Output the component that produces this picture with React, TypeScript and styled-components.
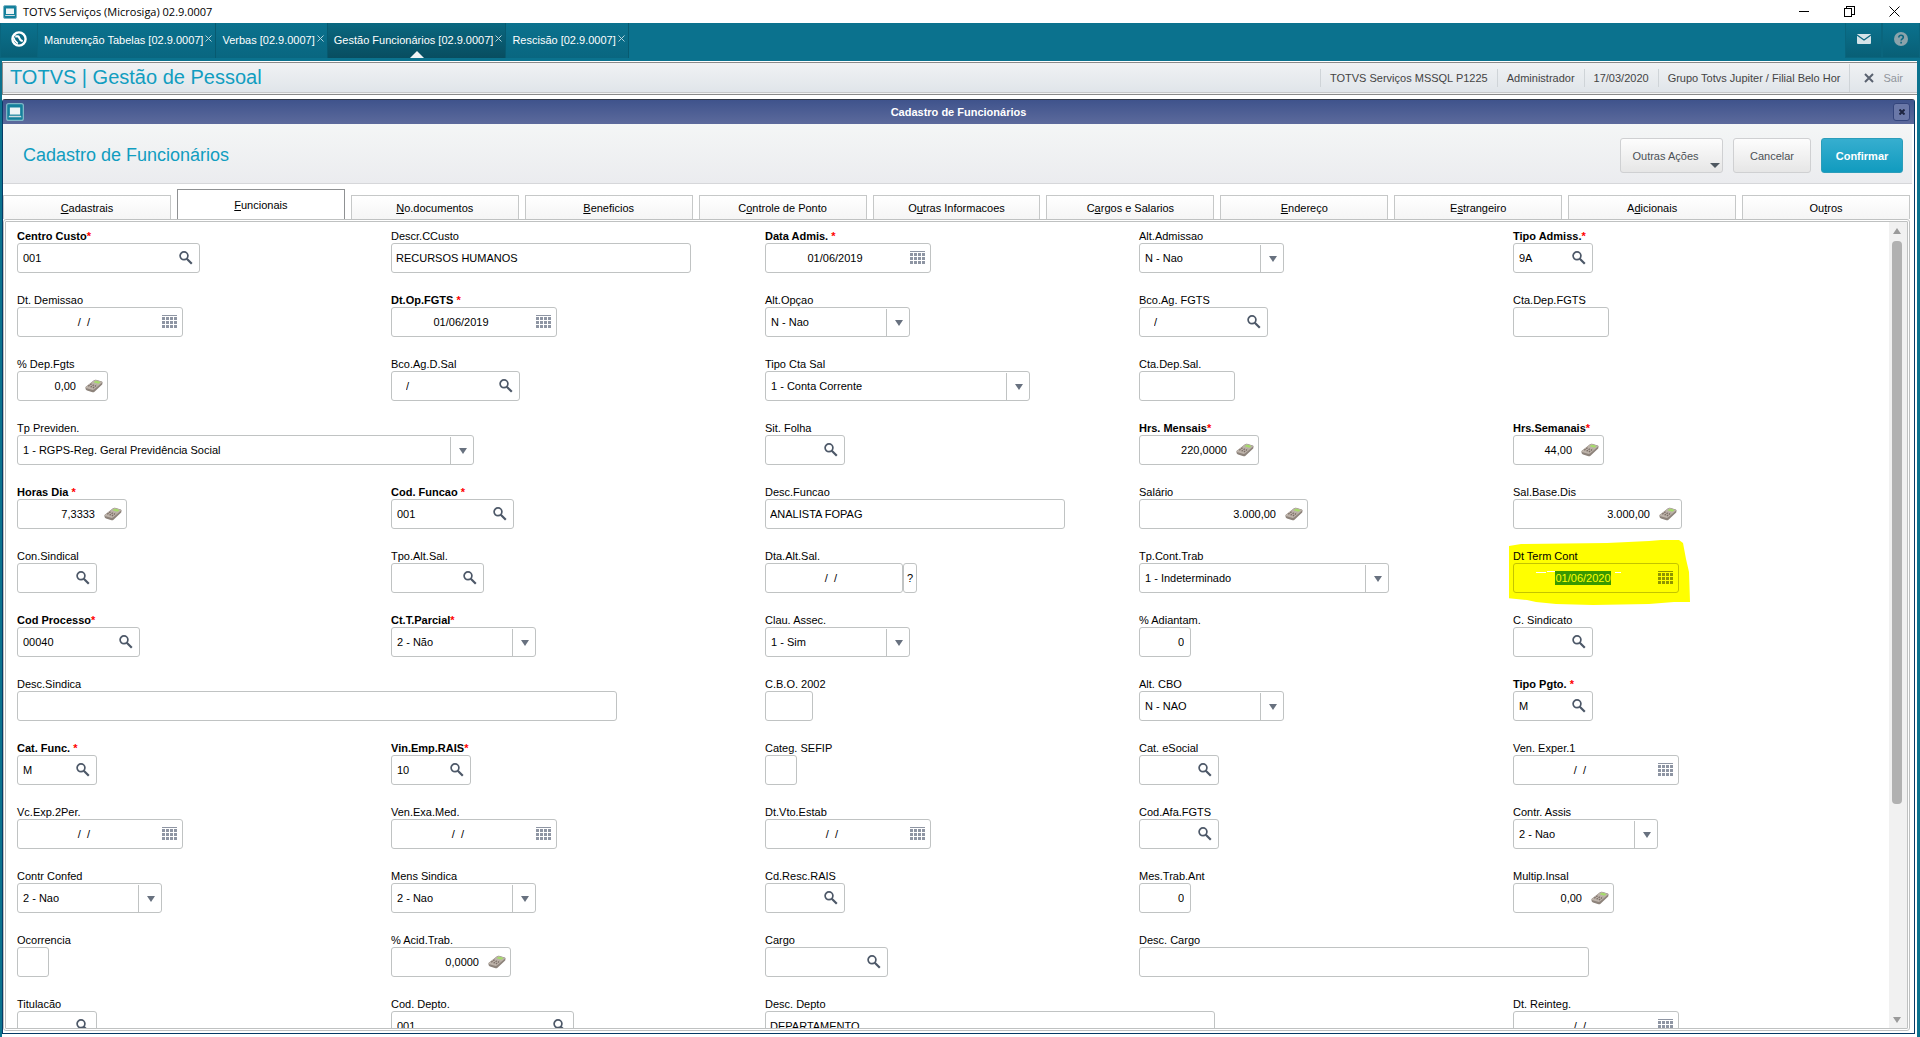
import React, { useId } from 'react';
import styled, { createGlobalStyle, css } from 'styled-components';

const GlobalStyle = createGlobalStyle`
  * { box-sizing: border-box; }
  body { margin: 0; background: #0b728e; overflow: hidden; }
  button, input, select { font: inherit; color: inherit; margin: 0; }
`;

const Page = styled.div`
  display: flex;
  flex-direction: column;
  height: 100vh;
  font: 11px/14px "Liberation Sans", Arial, sans-serif;
  color: #000;
`;

const TitleBar = styled.div`
  display: flex;
  align-items: center;
  height: 23px;
  padding: 0 20px 0 3px;
  gap: 6px;
  background: #fff;
  font: 11px/20px "Open Sans", "Noto Sans", sans-serif;
  flex: none;
`;

const TitleText = styled.span`
  flex: 1;
`;

const PlainButton = styled.button`
  display: flex;
  align-items: center;
  justify-content: center;
  padding: 0;
  border: 0;
  background: none;
  line-height: 14px;
`;

const WindowControls = styled.div`
  display: flex;
  gap: 34px;
`;

const NavBar = styled.nav`
  display: flex;
  height: 38px;
  padding-bottom: 3px;
  background: #0b728e;
  flex: none;
`;

const NavBlock = styled(PlainButton)<{ $w: number }>`
  width: ${(p) => p.$w}px;
  padding-bottom: 2px;
  background: linear-gradient(#0b728e, #085f76);
  border: 1px solid #0a657d;
  border-top: 0;
`;

const NavTab = styled.div<{ $active?: boolean }>`
  position: relative;
  display: flex;
  align-items: center;
  gap: 2px;
  padding: 0 3px 2px 6px;
  color: #fff;
  border-right: 1px solid #075a70;
  background: ${(p) => (p.$active ? 'linear-gradient(#0a6880, #084d60)' : 'linear-gradient(#0b728e, #096680)')};
`;

const NavLabel = styled(PlainButton)`
  white-space: nowrap;
`;

const NavClose = styled(PlainButton)`
  padding-bottom: 2px;
`;

const NavArrow = styled.span`
  position: absolute;
  left: 50%;
  bottom: 0;
  margin-left: -7px;
  border: 7px solid transparent;
  border-top: 0;
  border-bottom-color: #f2f4f6;
`;

const Spacer = styled.div`
  flex: 1;
`;

const Workspace = styled.main`
  display: flex;
  flex-direction: column;
  flex: 1;
  min-height: 0;
  margin: 0 3px 0 2px;
  background: #fff;
`;

const ModuleBar = styled.header`
  display: flex;
  align-items: center;
  height: 33px;
  margin-top: 1px;
  padding: 0 0 2px 7px;
  border: solid #8a8a8a;
  border-width: 1px 0 1px 1px;
  background: linear-gradient(#f0f2f4, #dfe4e9);
  box-shadow: inset 0 -1px #f4f4f4, inset 0 -2px #c6c8ca;
  flex: none;
`;

const ModuleTitle = styled.h1`
  flex: 1;
  margin: 0;
  padding-bottom: 2px;
  font-size: 20px;
  line-height: 24px;
  font-weight: 400;
  color: #119dc0;
`;

const ModuleInfo = styled.span`
  padding: 0 9px;
  line-height: 18px;
  border-left: 1px solid #cfd4d8;
  color: #444;
  white-space: nowrap;
`;

const ExitButton = styled(PlainButton)`
  gap: 9px;
  height: 28px;
  padding: 0 14px;
  border-left: 1px solid #cfd4d8;
  color: #90959c;
`;

const Dialog = styled.section`
  display: flex;
  flex-direction: column;
  flex: 1;
  min-height: 0;
  margin: 4px 2px 3px 0;
  border: 1px solid #063a66;
  border-top-color: #303848;
  border-radius: 3px 3px 0 0;
  padding-right: 2px;
`;

const DialogBar = styled.div`
  display: flex;
  align-items: center;
  height: 24px;
  margin-right: -2px;
  padding: 0 4px 0 3px;
  background: linear-gradient(#3f538c, #5c6a9c);
  color: #fff;
  font-weight: 700;
  flex: none;
`;

const DialogName = styled.span`
  flex: 1;
  text-align: center;
`;

const DialogClose = styled(PlainButton)`
  width: 17px;
  height: 18px;
  border: 1px solid #34457c;
  border-radius: 3px;
  background: #6a78a8;
`;

const DialogHeader = styled.div`
  display: flex;
  align-items: center;
  gap: 10px;
  height: 60px;
  padding: 4px 9px 0 20px;
  border-bottom: 1px solid #d6d7da;
  background: linear-gradient(#f4f6f6, #ebecef);
  flex: none;
`;

const DialogTitle = styled.h2`
  flex: 1;
  margin: 0;
  padding-bottom: 2px;
  font-size: 18px;
  line-height: 24px;
  font-weight: 400;
  color: #119dc0;
`;

const ActionButton = styled.button<{ $w: number; $primary?: boolean }>`
  position: relative;
  width: ${(p) => p.$w}px;
  height: 35px;
  padding: 0;
  border: 1px solid #cfd0d2;
  border-radius: 3px;
  background: linear-gradient(#fdfdfd, #e6e6e6);
  color: #4c5156;
  ${(p) =>
    p.$primary &&
    css`
      border-color: #2b9dba;
      background: linear-gradient(#36aecf, #119bbf);
      color: #fff;
      font-weight: 700;
    `}
`;

const ActionText = styled.span<{ $menu?: boolean }>`
  padding-right: ${(p) => (p.$menu ? 12 : 0)}px;
`;

const Caret = styled.span`
  position: absolute;
  right: 2px;
  bottom: 4px;
  border: 5px solid transparent;
  border-bottom: 0;
  border-top-color: #4f5861;
`;

const Tabs = styled.div`
  display: flex;
  align-items: flex-end;
  gap: 6px;
  height: 35px;
  margin-right: 2px;
  flex: none;
`;

const Tab = styled.button<{ $active?: boolean }>`
  flex: 1;
  height: ${(p) => (p.$active ? 30 : 24)}px;
  padding: 0;
  border: 1px solid ${(p) => (p.$active ? '#8f9193' : '#c6c8c8')};
  border-bottom: 0;
  background: ${(p) => (p.$active ? '#fff' : 'linear-gradient(#fff, #f5f5f5)')};
`;

const Panel = styled.div`
  display: flex;
  flex: 1;
  min-height: 0;
  margin: 0 2px 2px 0;
  border: 3px double #bfc1c1;
  border-radius: 3px;
`;

const FieldArea = styled.form`
  flex: 1;
  min-width: 0;
  overflow: hidden;
  padding: 6px 2px 0 11px;
  display: grid;
  grid-template-columns: repeat(5, minmax(0, 1fr));
  grid-auto-rows: 64px;
`;

const Scrollbar = styled.div`
  display: flex;
  flex-direction: column;
  align-items: center;
  width: 18px;
  padding: 6px 2px 5px 0;
  gap: 7px;
  background: #f1f1f1;
`;

const ScrollThumb = styled.div`
  width: 10px;
  height: 563px;
  border-radius: 4px;
  background: #b1b1b1;
`;

const ScrollArrow = styled.span<{ $down?: boolean }>`
  border: 4px solid transparent;
  ${(p) => (p.$down ? 'border-bottom: 0; border-top: 6px solid #9a9a9a; margin-top: auto;' : 'border-top: 0; border-bottom: 6px solid #9a9a9a;')}
`;

const FieldCell = styled.div<{ $col: number; $row: number }>`
  position: relative;
  grid-column: ${(p) => p.$col};
  grid-row: ${(p) => p.$row};
`;

const Label = styled.label<{ $required?: boolean }>`
  position: relative;
  display: block;
  height: 15px;
  line-height: 16px;
  font-weight: ${(p) => (p.$required ? 700 : 400)};
`;

const Star = styled.span`
  color: #f00;
`;

const ControlRow = styled.div`
  display: flex;
`;

const Box = styled.div<{ $w: number; $marked?: boolean }>`
  position: relative;
  display: flex;
  align-items: center;
  width: ${(p) => p.$w}px;
  height: 30px;
  flex: none;
  border: 1px solid ${(p) => (p.$marked ? '#c4c400' : '#c0c3c3')};
  border-radius: 3px;
  background: ${(p) => (p.$marked ? 'transparent' : '#fff')};
`;

const padFor: Record<Kind, string> = {
  text: '0 4px',
  num: '0 6px',
  search: '0 0 0 5px',
  code: '0 0 0 14px',
  date: '0',
  ask: '0',
  calc: '0 4px 0 0',
  select: '0 5px',
};

const TextInput = styled.input<{ $kind: Kind }>`
  flex: 1;
  min-width: 0;
  height: 26px;
  padding: ${(p) => padFor[p.$kind]};
  border: 0;
  outline: 0;
  background: transparent;
  text-align: ${(p) =>
    p.$kind === 'num' || p.$kind === 'calc' ? 'right' : p.$kind === 'date' || p.$kind === 'ask' ? 'center' : 'left'};
`;

const MarkedDate = styled(TextInput)`
  flex: none;
  width: 56px;
  height: 14px;
  margin: 0 41px;
  background: #389800;
  color: #ff0;
`;

const Select = styled.select`
  appearance: none;
  flex: 1;
  min-width: 0;
  height: 28px;
  padding: 0 24px 0 5px;
  border: 0;
  outline: 0;
  background: transparent;
`;

const SelectArrow = styled.span`
  position: absolute;
  right: 0;
  top: 1px;
  bottom: 0;
  width: 23px;
  padding-left: 2px;
  display: flex;
  align-items: center;
  justify-content: center;
  border-left: 1px solid #c0c3c3;
  pointer-events: none;

  &::after {
    content: '';
    border: 4px solid transparent;
    border-top: 6px solid #68717f;
    border-bottom: 0;
  }
`;

const IconButton = styled(PlainButton)<{ $w: number }>`
  width: ${(p) => p.$w}px;
  height: 26px;
  flex: none;
`;

const AskButton = styled(PlainButton)`
  width: 14px;
  height: 30px;
  border: 1px solid #c0c3c3;
  border-radius: 3px;
`;

const Highlight = styled.svg`
  position: absolute;
  left: -4px;
  top: -8px;
`;

const AppIcon = ({ size = 14 }: { size?: number }) => (
  <svg width={size} height={size} viewBox="0 0 14 14">
    <rect x=".5" y=".5" width="13" height="13" rx="1.5" fill="#14809c" stroke="#7fb6c6" />
    <rect x="3" y="3.500" width="8" height="5.500" fill="#eef4f6" />
    <path d="M2.500 10h9l.6 1H1.900z" fill="#cfdde2" />
  </svg>
);

const SearchIcon = () => (
  <svg width="14" height="14" viewBox="0 0 14 14" fill="none" stroke="#4d5868">
    <circle cx="5" cy="4.800" r="3.900" strokeWidth="1.700" />
    <path d="M7.800 7.800l5 5" strokeWidth="2.200" />
  </svg>
);

const CalendarIcon = ({ color = '#8e95a3' }: { color?: string }) => (
  <svg width="15" height="14" viewBox="0 0 15 14" fill={color} shapeRendering="crispEdges">
    <rect width="15" height="1" />
    {[2, 6, 10].map((y) => [0, 4, 8, 12].map((x) => <rect key={`${x}-${y}`} x={x} y={y} width="3" height="3" />))}
  </svg>
);

const CalculatorIcon = () => (
  <svg width="18" height="14" viewBox="0 0 18 14">
    <path d="M.5 8L9 1.200q1-.7 2-.4l5.800 1.700q1 .4.700 1.500l-.3 1.500L9.500 12.800q-1 .8-2 .4L2 11.500Q.6 10.800.5 9.500z" fill="#8d837b" />
    <path d="M.8 8L9 1.400q1-.6 2-.4l5.600 1.700q.9.500 0 1.300L9 10.400q-1 .7-2 .4L1.500 9.300Q0 8.800.8 8z" fill="#bdb3aa" />
    <path d="M8.600 3.200l1.700-1.300q.5-.3 1-.2l3.700 1.100q.5.300 0 .7l-1.600 1.200z" fill="#a5dc6a" />
    <path d="M3.300 7.300l4-3.100M5.600 8.200l4-3.200M7.900 9l4-3.200" stroke="#7a6d66" strokeWidth="1.300" strokeDasharray="1.600 .9" />
  </svg>
);

type Kind = 'text' | 'num' | 'search' | 'code' | 'date' | 'ask' | 'calc' | 'select';
type FieldDef = [row: number, col: number, label: string, kind: Kind, width: number, value?: string];

const EMPTY_DATE = '/  /  ';

const fields: FieldDef[] = [
  [1, 1, 'Centro Custo*', 'search', 183, '001'],
  [1, 2, 'Descr.CCusto', 'text', 300, 'RECURSOS HUMANOS'],
  [1, 3, 'Data Admis. *', 'date', 166, '01/06/2019'],
  [1, 4, 'Alt.Admissao', 'select', 145, 'N - Nao'],
  [1, 5, 'Tipo Admiss.*', 'search', 80, '9A'],
  [2, 1, 'Dt. Demissao', 'date', 166, EMPTY_DATE],
  [2, 2, 'Dt.Op.FGTS *', 'date', 166, '01/06/2019'],
  [2, 3, 'Alt.Opçao', 'select', 145, 'N - Nao'],
  [2, 4, 'Bco.Ag. FGTS', 'code', 129, '/'],
  [2, 5, 'Cta.Dep.FGTS', 'text', 96],
  [3, 1, '% Dep.Fgts', 'calc', 91, '0,00'],
  [3, 2, 'Bco.Ag.D.Sal', 'code', 129, '/'],
  [3, 3, 'Tipo Cta Sal', 'select', 265, '1 - Conta Corrente'],
  [3, 4, 'Cta.Dep.Sal.', 'text', 96],
  [4, 1, 'Tp Previden.', 'select', 457, '1 - RGPS-Reg. Geral Previdência Social'],
  [4, 3, 'Sit. Folha', 'search', 80],
  [4, 4, 'Hrs. Mensais*', 'calc', 120, '220,0000'],
  [4, 5, 'Hrs.Semanais*', 'calc', 91, '44,00'],
  [5, 1, 'Horas Dia *', 'calc', 110, '7,3333'],
  [5, 2, 'Cod. Funcao *', 'search', 123, '001'],
  [5, 3, 'Desc.Funcao', 'text', 300, 'ANALISTA FOPAG'],
  [5, 4, 'Salário', 'calc', 169, '3.000,00'],
  [5, 5, 'Sal.Base.Dis', 'calc', 169, '3.000,00'],
  [6, 1, 'Con.Sindical', 'search', 80],
  [6, 2, 'Tpo.Alt.Sal.', 'search', 93],
  [6, 3, 'Dta.Alt.Sal.', 'ask', 138, EMPTY_DATE],
  [6, 4, 'Tp.Cont.Trab', 'select', 250, '1 - Indeterminado'],
  [6, 5, 'Dt Term Cont', 'date', 166, '01/06/2020'],
  [7, 1, 'Cod Processo*', 'search', 123, '00040'],
  [7, 2, 'Ct.T.Parcial*', 'select', 145, '2 - Não'],
  [7, 3, 'Clau. Assec.', 'select', 145, '1 - Sim'],
  [7, 4, '% Adiantam.', 'num', 52, '0'],
  [7, 5, 'C. Sindicato', 'search', 80],
  [8, 1, 'Desc.Sindica', 'text', 600],
  [8, 3, 'C.B.O. 2002', 'text', 48],
  [8, 4, 'Alt. CBO', 'select', 145, 'N - NAO'],
  [8, 5, 'Tipo Pgto. *', 'search', 80, 'M'],
  [9, 1, 'Cat. Func. *', 'search', 80, 'M'],
  [9, 2, 'Vin.Emp.RAIS*', 'search', 80, '10'],
  [9, 3, 'Categ. SEFIP', 'text', 32],
  [9, 4, 'Cat. eSocial', 'search', 80],
  [9, 5, 'Ven. Exper.1', 'date', 166, EMPTY_DATE],
  [10, 1, 'Vc.Exp.2Per.', 'date', 166, EMPTY_DATE],
  [10, 2, 'Ven.Exa.Med.', 'date', 166, EMPTY_DATE],
  [10, 3, 'Dt.Vto.Estab', 'date', 166, EMPTY_DATE],
  [10, 4, 'Cod.Afa.FGTS', 'search', 80],
  [10, 5, 'Contr. Assis', 'select', 145, '2 - Nao'],
  [11, 1, 'Contr Confed', 'select', 145, '2 - Nao'],
  [11, 2, 'Mens Sindica', 'select', 145, '2 - Nao'],
  [11, 3, 'Cd.Resc.RAIS', 'search', 80],
  [11, 4, 'Mes.Trab.Ant', 'num', 52, '0'],
  [11, 5, 'Multip.Insal', 'calc', 101, '0,00'],
  [12, 1, 'Ocorrencia', 'text', 32],
  [12, 2, '% Acid.Trab.', 'calc', 120, '0,0000'],
  [12, 3, 'Cargo', 'search', 123],
  [12, 4, 'Desc. Cargo', 'text', 450],
  [13, 1, 'Titulacão', 'search', 80],
  [13, 2, 'Cod. Depto.', 'search', 183, '001'],
  [13, 3, 'Desc. Depto', 'text', 450, 'DEPARTAMENTO'],
  [13, 5, 'Dt. Reinteg.', 'date', 166, EMPTY_DATE],
];

const MARKED_FIELD = 'Dt Term Cont';

function Field({ def }: { def: FieldDef }) {
  const [row, col, label, kind, width, value = ''] = def;
  const id = useId();
  const required = label.endsWith('*');
  const marked = label === MARKED_FIELD;
  const name = required ? label.slice(0, -1) : label;
  return (
    <FieldCell $row={row} $col={col}>
      {marked && (
        <Highlight width="182" height="66" viewBox="0 0 182 66">
          <path d="M0 6L12 4l86-1 42-2 12-1h18l4 3 3 16 3 13 1 30h-16l-25 2-56 1-37-1-20-2-9-2-22-2-2-6-2-8z" fill="#ff0" />
          <path d="M27 32.500h10M38 31.500h54M106 32.500h6" stroke="#fff" />
        </Highlight>
      )}
      <Label htmlFor={id} $required={required}>
        {name}
        {required && <Star>*</Star>}
      </Label>
      <ControlRow>
        <Box $w={width} $marked={marked}>
          {kind === 'select' ? (
            <>
              <Select id={id} defaultValue={value}>
                <option>{value}</option>
              </Select>
              <SelectArrow />
            </>
          ) : marked ? (
            <MarkedDate id={id} $kind={kind} defaultValue={value} />
          ) : (
            <TextInput id={id} $kind={kind} defaultValue={value} />
          )}
          {(kind === 'search' || kind === 'code') && (
            <IconButton type="button" $w={27} aria-label="Pesquisar">
              <SearchIcon />
            </IconButton>
          )}
          {kind === 'date' && (
            <IconButton type="button" $w={26} aria-label="Calendário">
              <CalendarIcon color={marked ? '#8f9500' : undefined} />
            </IconButton>
          )}
          {kind === 'calc' && (
            <IconButton type="button" $w={27} aria-label="Calculadora">
              <CalculatorIcon />
            </IconButton>
          )}
        </Box>
        {kind === 'ask' && <AskButton type="button">?</AskButton>}
      </ControlRow>
    </FieldCell>
  );
}

const navTabs = [
  'Manutenção Tabelas [02.9.0007]',
  'Verbas [02.9.0007]',
  'Gestão Funcionários [02.9.0007]',
  'Rescisão [02.9.0007]',
];

// Each tab: its text and the position of the underlined access key.
const formTabs: [string, number][] = [
  ['Cadastrais', 0],
  ['Funcionais', 0],
  ['No.documentos', 0],
  ['Beneficios', 0],
  ['Controle de Ponto', 1],
  ['Outras Informacoes', 1],
  ['Cargos e Salarios', 1],
  ['Endereço', 0],
  ['Estrangeiro', 1],
  ['Adicionais', 1],
  ['Outros', 2],
];

export default function App() {
  return (
    <Page>
      <GlobalStyle />
      <TitleBar>
        <AppIcon />
        <TitleText>TOTVS Serviços (Microsiga) 02.9.0007</TitleText>
        <WindowControls>
          <PlainButton aria-label="Minimizar">
            <svg width="11" height="11" stroke="#000" shapeRendering="crispEdges"><path d="M0 5.500h10" /></svg>
          </PlainButton>
          <PlainButton aria-label="Restaurar">
            <svg width="11" height="11" fill="none" stroke="#000" shapeRendering="crispEdges">
              <path d="M.5 2.500h7v8h-7zM2.500 2.500v-2h8v8h-3" />
            </svg>
          </PlainButton>
          <PlainButton aria-label="Fechar">
            <svg width="11" height="11" stroke="#000"><path d="M.5.5l10 10M10.500.5l-10 10" /></svg>
          </PlainButton>
        </WindowControls>
      </TitleBar>

      <NavBar>
        <NavBlock $w={38} aria-label="Início">
          <svg width="16" height="16" viewBox="0 0 16 16" fill="none" stroke="#fff">
            <circle cx="8" cy="8" r="6.600" strokeWidth="2.400" />
            <path d="M4.300 5.600q3.200-1.100 4 1.400t3.400 3.300" strokeWidth="2.200" />
            <path d="M2.600 6.500q.8 3.800 4.200 6" strokeWidth="1.600" />
          </svg>
        </NavBlock>
        {navTabs.map((t, i) => (
          <NavTab key={t} $active={i === 2}>
            <NavLabel>{t}</NavLabel>
            <NavClose aria-label="Fechar aba">
              <svg width="7" height="7" stroke="#b5d3dc"><path d="M.5.5l6 6M6.500.5l-6 6" /></svg>
            </NavClose>
            {i === 2 && <NavArrow />}
          </NavTab>
        ))}
        <Spacer />
        <NavBlock $w={37} aria-label="Mensagens">
          <svg width="14" height="10" viewBox="0 0 14 10">
            <rect width="14" height="10" rx="1" fill="#d5e3e8" />
            <path d="M0 1l7 5 7-5" fill="none" stroke="#0a6680" strokeWidth="1.300" />
          </svg>
        </NavBlock>
        <NavBlock $w={38} aria-label="Ajuda">
          <svg width="14" height="14" viewBox="0 0 14 14">
            <circle cx="7" cy="7" r="7" fill="#8ba3ab" />
            <path d="M4.800 5.400c0-3 4.500-2.700 4.500-.2 0 1.600-2.200 1.600-2.200 3.300M7.100 9.800v1.600" fill="none" stroke="#0a6680" strokeWidth="1.600" />
          </svg>
        </NavBlock>
      </NavBar>

      <Workspace>
        <ModuleBar>
          <ModuleTitle>TOTVS | Gestão de Pessoal</ModuleTitle>
          <ModuleInfo>TOTVS Serviços MSSQL P1225</ModuleInfo>
          <ModuleInfo>Administrador</ModuleInfo>
          <ModuleInfo>17/03/2020</ModuleInfo>
          <ModuleInfo>Grupo Totvs Jupiter / Filial Belo Hor</ModuleInfo>
          <ExitButton>
            <svg width="10" height="10" stroke="#5a6270" strokeWidth="2"><path d="M1 1l8 8M9 1L1 9" /></svg>
            Sair
          </ExitButton>
        </ModuleBar>

        <Dialog>
          <DialogBar>
            <AppIcon size={18} />
            <DialogName>Cadastro de Funcionários</DialogName>
            <DialogClose aria-label="Fechar janela">
              <svg width="6" height="6" stroke="#1d2540" strokeWidth="2"><path d="M.5.5l5 5M5.500.5l-5 5" /></svg>
            </DialogClose>
          </DialogBar>
          <DialogHeader>
            <DialogTitle>Cadastro de Funcionários</DialogTitle>
            <ActionButton $w={103}>
              <ActionText $menu>Outras Ações</ActionText>
              <Caret />
            </ActionButton>
            <ActionButton $w={78}>
              <ActionText>Cancelar</ActionText>
            </ActionButton>
            <ActionButton $w={82} $primary>
              <ActionText>Confirmar</ActionText>
            </ActionButton>
          </DialogHeader>
          <Tabs role="tablist">
            {formTabs.map(([text, key], i) => (
              <Tab key={text} role="tab" $active={i === 1}>
                {text.slice(0, key)}
                <u>{text[key]}</u>
                {text.slice(key + 1)}
              </Tab>
            ))}
          </Tabs>
          <Panel>
            <FieldArea>
              {fields.map((f) => (
                <Field key={f[2]} def={f} />
              ))}
            </FieldArea>
            <Scrollbar>
              <ScrollArrow />
              <ScrollThumb />
              <ScrollArrow $down />
            </Scrollbar>
          </Panel>
        </Dialog>
      </Workspace>
    </Page>
  );
}
